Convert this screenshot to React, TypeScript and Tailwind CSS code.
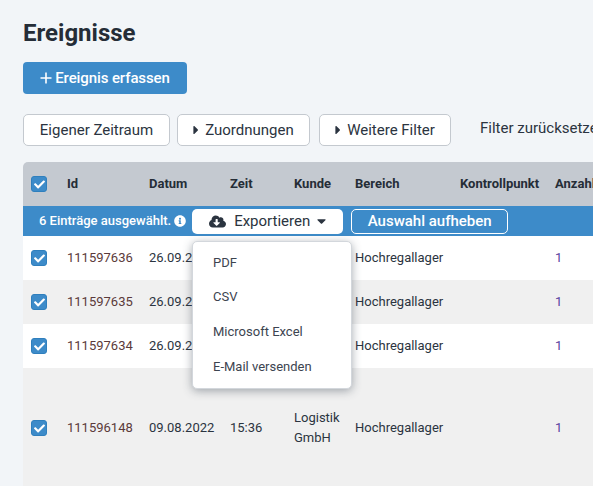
import { FaCaretDown, FaCaretRight, FaCheck, FaCloudDownloadAlt, FaInfoCircle } from "react-icons/fa";

const rowGrid = "grid grid-cols-[44px_82px_81px_64px_61px_105px_95px_80px] items-center";

const rows = [
  { id: "111597636", date: "26.09.2022", time: "", customer: "", height: "h-[44px]", bg: "bg-white" },
  { id: "111597635", date: "26.09.2022", time: "", customer: "", height: "h-[44px]", bg: "bg-[#f0f0f0]" },
  { id: "111597634", date: "26.09.2022", time: "", customer: "", height: "h-[44px]", bg: "bg-white" },
  { id: "111596148", date: "09.08.2022", time: "15:36", customer: "Logistik GmbH", height: "h-[120px]", bg: "bg-[#f0f0f0]" },
];

function Checkbox() {
  return (
    <span className="ml-[8px] flex h-[16px] w-[16px] items-center justify-center rounded-[3px] border border-[#2f7fbd] bg-[#3d8bc9] text-white">
      <FaCheck className="h-[11px] w-[11px]" />
    </span>
  );
}

function FilterButton({ label, caret }: { label: string; caret?: boolean }) {
  return (
    <button className="flex h-[32px] w-full items-center justify-center gap-[6px] rounded-[5px] border border-[#c4c9cf] bg-white text-[15px] text-[#2b3440]">
      {caret && <FaCaretRight className="h-[14px] w-[6px] text-[#2b3440]" />}
      {label}
    </button>
  );
}

export default function App() {
  return (
    <div className="relative h-[486px] w-[593px] overflow-hidden bg-[#f2f5f8] pl-[23px] font-['Roboto',sans-serif] text-[#2b3440]">
      <h1 className="pt-[18px] text-[24px] leading-[30px] font-bold text-[#252d37]">Ereignisse</h1>

      <button className="mt-[14px] flex h-[32px] w-[164px] items-center justify-center gap-[3px] rounded-[4px] bg-[#3d8bc9] text-[15px] font-medium tracking-[-0.1px] text-white">
        <svg viewBox="0 0 12 12" className="h-[12px] w-[12px]" fill="none" stroke="currentColor" strokeWidth="1.6">
          <path d="M6 0.5v11M0.5 6h11" />
        </svg>
        Ereignis erfassen
      </button>

      <div className="mt-[20px] flex w-[620px] items-center">
        <div className="w-[147px]">
          <FilterButton label="Eigener Zeitraum" />
        </div>
        <div className="ml-[7px] w-[133px]">
          <FilterButton label="Zuordnungen" caret />
        </div>
        <div className="ml-[9px] w-[132px]">
          <FilterButton label="Weitere Filter" caret />
        </div>
        <span className="mb-[4px] ml-[29px] text-[15px] whitespace-nowrap text-[#2b3440]">Filter zurücksetzen</span>
      </div>

      <div className="mt-[16px] w-[640px] overflow-hidden rounded-t-[5px]">
        <div className={`${rowGrid} h-[44px] bg-[#c4c9d0] text-[13px] font-bold text-[#252d37]`}>
          <Checkbox />
          <span>Id</span>
          <span>Datum</span>
          <span>Zeit</span>
          <span>Kunde</span>
          <span>Bereich</span>
          <span>Kontrollpunkt</span>
          <span>Anzahl</span>
        </div>

        <div className="flex h-[30px] items-center bg-[#3d8bc9] pl-[16px] text-white">
          <span className="text-[13px] font-medium">6 Einträge ausgewählt.</span>
          <FaInfoCircle className="ml-[3px] h-[12px] w-[12px]" />
          <button className="ml-[6px] flex h-[25px] w-[151px] items-center justify-center rounded-[5px] bg-white text-[15px] text-[#2b3440]">
            <FaCloudDownloadAlt className="mr-[8px] h-[15px] w-[17px]" />
            Exportieren
            <FaCaretDown className="ml-[7px] h-[14px] w-[9px]" />
          </button>
          <button className="ml-[8px] h-[25px] w-[157px] rounded-[5px] border border-white text-[15px] font-medium text-white">
            Auswahl aufheben
          </button>
        </div>

        {rows.map((row) => (
          <div key={row.id} className={`${rowGrid} ${row.height} ${row.bg} text-[13px] text-[#2b3440]`}>
            <Checkbox />
            <span className="text-[#5b3a3a]">{row.id}</span>
            <span>{row.date}</span>
            <span>{row.time}</span>
            <span className="pr-[6px] leading-[20px]">{row.customer}</span>
            <span>Hochregallager</span>
            <span />
            <span className="text-[#5a3fa0]">1</span>
          </div>
        ))}
      </div>

      <div className="absolute top-[241px] left-[192px] flex h-[148px] w-[160px] flex-col rounded-[5px] border border-[#d3d7dc] bg-white pt-[3px] text-[13px] text-[#3c4450] shadow-[0_2px_10px_rgba(60,70,85,0.45)]">
        <span className="flex h-[34.7px] items-center pl-[20px]">PDF</span>
        <span className="flex h-[34.7px] items-center pl-[20px]">CSV</span>
        <span className="flex h-[34.7px] items-center pl-[20px]">Microsoft Excel</span>
        <span className="flex h-[34.7px] items-center pl-[20px]">E-Mail versenden</span>
      </div>
    </div>
  );
}
